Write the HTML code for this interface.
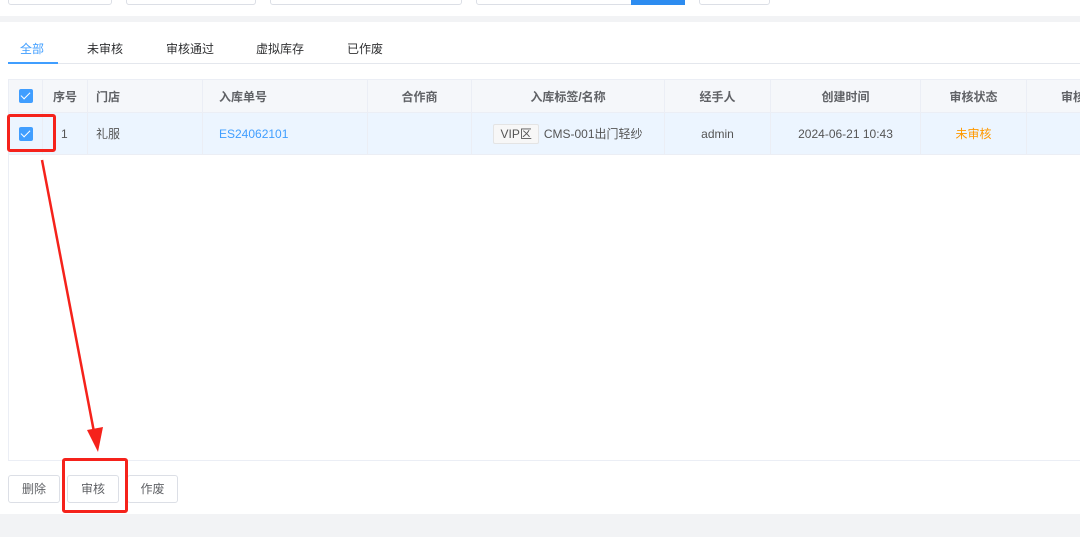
<!DOCTYPE html><html><head><meta charset="utf-8"><style>
*{margin:0;padding:0;box-sizing:border-box}
body{width:1080px;height:537px;background:#f2f3f5;font-family:"Liberation Sans","Noto Sans CJK SC",sans-serif;font-size:12px;color:#606266;position:relative;overflow:hidden}
.abs{position:absolute}
.top{left:0;top:0;width:1080px;height:16px;background:#fff}
.inp{top:-4px;height:9px;border:1px solid #dcdfe6;border-radius:3px;background:#fff}
.card{left:0;top:22px;width:1080px;height:492px;background:#fff}
.tab{top:40px;font-size:12px;color:#303133}
.wrap{position:absolute;left:8px;top:79px;width:1072px;height:80px;overflow:hidden}
table{width:1118px;border-collapse:collapse;table-layout:fixed}
td,th{border:1px solid #ebeef5;height:33px;padding:0 8px;font-size:12px;white-space:nowrap;overflow:hidden}
th{background:#f5f7fa;color:#606266;font-weight:bold;text-align:center}
tr.r td{background:#ecf5ff;height:42px;color:#555}
.cb{display:inline-block;width:14px;height:14px;background:#409eff;border-radius:2px;position:relative;vertical-align:middle}
.cb:after{content:"";position:absolute;left:4px;top:1px;width:4px;height:8px;border:solid #fff;border-width:0 1.5px 1.5px 0;transform:rotate(45deg)}
.btn{top:475px;height:28px;border:1px solid #dcdfe6;border-radius:3px;background:#fff;text-align:center;line-height:26px;font-size:12px;color:#606266}
.red{border:3px solid #f5221b;border-radius:3px}
</style></head><body>
<div class="abs top"></div>
<div class="abs inp" style="left:8px;width:104px"></div>
<div class="abs inp" style="left:126px;width:130px"></div>
<div class="abs inp" style="left:270px;width:192px"></div>
<div class="abs inp" style="left:476px;width:209px"></div>
<div class="abs" style="left:631px;top:0;width:54px;height:5px;background:#2d8cf0"></div>
<div class="abs inp" style="left:699px;width:71px"></div>
<div class="abs card"></div>
<div class="abs tab" style="left:20px;color:#409eff">全部</div>
<div class="abs tab" style="left:87px">未审核</div>
<div class="abs tab" style="left:166px">审核通过</div>
<div class="abs tab" style="left:256px">虚拟库存</div>
<div class="abs tab" style="left:347px">已作废</div>
<div class="abs" style="left:8px;top:63px;width:1072px;height:1px;background:#e4e7ed"></div>
<div class="abs" style="left:8px;top:62px;width:50px;height:2px;background:#409eff"></div>
<div class="abs" style="left:8px;top:79px;width:1073px;height:382px;border:1px solid #ebeef5"></div>
<div class="wrap"><table>
<colgroup><col style="width:34px"><col style="width:45px"><col style="width:115px"><col style="width:165px"><col style="width:104px"><col style="width:193px"><col style="width:106px"><col style="width:150px"><col style="width:106px"><col style="width:100px"></colgroup>
<tr><th><span class="cb"></span></th><th style="padding:0 4px">序号</th><th style="text-align:left">门店</th><th style="text-align:left;padding-left:16px">入库单号</th><th>合作商</th><th>入库标签/名称</th><th>经手人</th><th>创建时间</th><th>审核状态</th><th style="text-align:left;padding-left:34px">审核</th></tr>
<tr class="r"><td style="text-align:center"><span class="cb"></span></td><td style="text-align:left;padding-left:18px">1</td><td>礼服</td><td style="color:#409eff;padding-left:16px">ES24062101</td><td></td><td style="text-align:center"><span style="display:inline-block;border:1px solid #e4e4e4;background:#f7f7f7;padding:0 6px;height:20px;line-height:18px;border-radius:2px;margin-right:5px">VIP区</span>CMS-001出门轻纱</td><td style="text-align:center">admin</td><td style="text-align:center">2024-06-21 10:43</td><td style="text-align:center;color:#ff9900">未审核</td><td></td></tr>
</table></div>
<div class="abs btn" style="left:8px;width:52px">删除</div>
<div class="abs btn" style="left:67px;width:52px">审核</div>
<div class="abs btn" style="left:127px;width:51px">作废</div>
<div class="abs red" style="left:7px;top:114px;width:49px;height:38px"></div>
<div class="abs red" style="left:62px;top:458px;width:66px;height:55px"></div>
<svg class="abs" style="left:0;top:0" width="1080" height="537"><line x1="42" y1="160" x2="94" y2="432" stroke="#f5221b" stroke-width="2.5"/><polygon points="87,430 103,427 98,452" fill="#f5221b"/></svg>
</body></html>
